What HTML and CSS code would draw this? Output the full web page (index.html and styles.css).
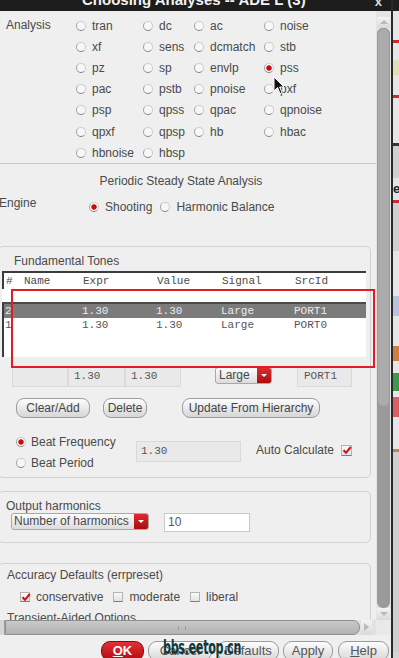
FILE: index.html
```html
<!DOCTYPE html>
<html>
<head>
<meta charset="UTF-8">
<title>Choosing Analyses -- ADE L (3)</title>
<link rel="stylesheet" href="styles.css">
</head>
<body>
<div class="screen">
  <div class="dialog">
    <div class="titlebar">
      <span class="title">Choosing Analyses -- ADE L (3)</span>
      <span class="close">x</span>
    </div>
    <div class="main">
      <div class="content">
        <!-- analysis type chooser -->
        <div class="analysis">
          <div class="lbl">Analysis</div>
          <label class="opt"><i class="radio"></i>tran</label>
          <label class="opt"><i class="radio"></i>dc</label>
          <label class="opt"><i class="radio"></i>ac</label>
          <label class="opt"><i class="radio"></i>noise</label>
          <label class="opt"><i class="radio"></i>xf</label>
          <label class="opt"><i class="radio"></i>sens</label>
          <label class="opt"><i class="radio"></i>dcmatch</label>
          <label class="opt"><i class="radio"></i>stb</label>
          <label class="opt"><i class="radio"></i>pz</label>
          <label class="opt"><i class="radio"></i>sp</label>
          <label class="opt"><i class="radio"></i>envlp</label>
          <label class="opt"><i class="radio on"></i>pss</label>
          <label class="opt"><i class="radio"></i>pac</label>
          <label class="opt"><i class="radio"></i>pstb</label>
          <label class="opt"><i class="radio"></i>pnoise</label>
          <label class="opt"><i class="radio"></i>pxf</label>
          <label class="opt"><i class="radio"></i>psp</label>
          <label class="opt"><i class="radio"></i>qpss</label>
          <label class="opt"><i class="radio"></i>qpac</label>
          <label class="opt"><i class="radio"></i>qpnoise</label>
          <label class="opt"><i class="radio"></i>qpxf</label>
          <label class="opt"><i class="radio"></i>qpsp</label>
          <label class="opt"><i class="radio"></i>hb</label>
          <label class="opt"><i class="radio"></i>hbac</label>
          <label class="opt"><i class="radio"></i>hbnoise</label>
          <label class="opt"><i class="radio"></i>hbsp</label>
        </div>

        <div class="pss">
          <div class="pss-title">Periodic Steady State Analysis</div>
          <div class="engine">
            <div class="engine-lbl">Engine</div>
            <div class="engine-opts">
              <label class="opt"><i class="radio on"></i>Shooting</label>
              <label class="opt"><i class="radio"></i>Harmonic Balance</label>
            </div>
          </div>
        </div>

        <!-- fundamental tones -->
        <div class="group tones">
          <div class="group-lbl">Fundamental Tones</div>
          <div class="table">
            <div class="trow thead"><span>#</span><span>Name</span><span>Expr</span><span>Value</span><span>Signal</span><span>SrcId</span></div>
            <div class="tgap"></div>
            <div class="tbody">
              <div class="trow sel"><span>2</span><span></span><span>1.30</span><span>1.30</span><span>Large</span><span>PORT1</span></div>
              <div class="trow"><span>1</span><span></span><span>1.30</span><span>1.30</span><span>Large</span><span>PORT0</span></div>
            </div>
          </div>
          <div class="editrow">
            <div class="field f1"></div>
            <div class="field f2">1.30</div>
            <div class="field f3">1.30</div>
            <div class="combo c-signal"><span>Large</span><b class="combo-btn"></b></div>
            <div class="field f4">PORT1</div>
          </div>
          <div class="btnrow">
            <div class="btn b-clear">Clear/Add</div>
            <div class="btn b-delete">Delete</div>
            <div class="btn b-update">Update From Hierarchy</div>
          </div>
          <div class="beat">
            <div class="beat-opts">
              <label class="opt"><i class="radio on"></i>Beat Frequency</label>
              <label class="opt"><i class="radio"></i>Beat Period</label>
            </div>
            <div class="field beat-field">1.30</div>
            <div class="auto">Auto Calculate <i class="chk on"><svg viewBox="0 0 10 10"><path d="M1.5 5.2 L4 7.8 L8.8 2" /></svg></i></div>
          </div>
        </div>

        <div class="group harm">
          <div class="group-lbl">Output harmonics</div>
          <div class="harm-row">
            <div class="combo c-harm"><span>Number of harmonics</span><b class="combo-btn"></b></div>
            <div class="field harm-field">10</div>
          </div>
        </div>

        <div class="group acc">
          <div class="group-lbl">Accuracy Defaults (errpreset)</div>
          <div class="chkrow">
            <label class="copt"><i class="chk on"><svg viewBox="0 0 10 10"><path d="M1.5 5.2 L4 7.8 L8.8 2" /></svg></i>conservative</label>
            <label class="copt"><i class="chk"></i>moderate</label>
            <label class="copt"><i class="chk"></i>liberal</label>
          </div>
          <div class="group-lbl sub">Transient-Aided Options</div>
        </div>
      </div>

      <div class="vscroll">
        <div class="sarrow up"></div>
        <div class="vtrack"><div class="vthumb"></div></div>
        <div class="sarrow down"></div>
      </div>
    </div>

    <div class="hbar">
      <div class="htrack">
        <div class="hleft"></div>
        <div class="hthumb"><i></i></div>
        <div class="sarrow right"></div>
      </div>
      <div class="hcorner"></div>
    </div>

    <div class="actions">
      <div class="abtn ok"><u>O</u>K</div>
      <div class="abtn a-cancel">Cancel</div>
      <div class="abtn a-defaults">Defaults</div>
      <div class="abtn a-apply">Apply</div>
      <div class="abtn a-help"><u>H</u>elp</div>
    </div>
  </div>

  <!-- neighbouring window behind the dialog -->
  <div class="edge">
    <div class="e-dark"></div>
    <div class="e-light" style="height:29px"></div>
    <div class="e-red"></div>
    <div class="e-light" style="height:17px"></div>
    <div class="e-yellow"></div>
    <div class="e-light" style="height:20px"></div>
    <div class="e-red"></div>
    <div class="e-light" style="height:45px"></div>
    <div class="e-line"></div>
    <div class="e-mid" style="height:32px"></div>
    <div class="e-glyph">e</div>
    <div class="e-red"></div>
    <div class="e-mid" style="height:48px"></div>
    <div class="e-light" style="height:45px"></div>
    <div class="e-blue"></div>
    <div class="e-light" style="height:30px"></div>
    <div class="e-orange"></div>
    <div class="e-light" style="height:12px"></div>
    <div class="e-green"></div>
    <div class="e-light" style="height:6px"></div>
    <div class="e-pink"></div>
    <div class="e-light" style="height:32px"></div>
    <div class="e-orange thin"></div>
    <div class="e-mid" style="height:200px"></div>
  </div>
</div>

<div class="mark"></div>
<svg class="cursor" viewBox="0 0 12 19"><path d="M1 1 L1 15 L4.5 11.5 L7 17.5 L9 16.6 L6.6 11 L11 11 Z" fill="#111" stroke="#fff" stroke-width="1"/></svg>
<div class="watermark">bbs.eetop.cn</div>
</body>
</html>
```

FILE: styles.css
```css
* {
  box-sizing: border-box;
}
body {
  margin: 0;
  width: 399px;
  height: 658px;
  overflow: hidden;
  position: relative;
  font-family: "Liberation Sans", Arial, sans-serif;
  font-size: 12px;
  color: #4a4a4a;
  background: #efefef;
}
.screen {
  display: flex;
  height: 658px;
}
.dialog {
  width: 391px;
  display: flex;
  flex-direction: column;
  background: #efefef;
}

/* title bar, mostly scrolled off the top */
.titlebar {
  height: 11px;
  flex: none;
  display: flex;
  overflow: hidden;
  background: #1d1d1d;
}
.title {
  margin: -8px 0 0 82px;
  font-size: 15px;
  font-weight: bold;
  line-height: 16px;
  color: #f2f2f2;
  white-space: nowrap;
}
.close {
  margin: -6px 0 0 auto;
  padding-right: 9px;
  font-size: 13px;
  font-weight: bold;
  line-height: 16px;
  color: #dcdcdc;
}

.main {
  display: flex;
  height: 609px;
  flex: none;
}
.content {
  width: 376px;
  overflow: hidden;
}

/* radios / checks */
.opt {
  display: flex;
  align-items: center;
  gap: 6px;
  white-space: nowrap;
}
.radio {
  width: 10px;
  height: 10px;
  flex: none;
  border-radius: 50%;
  border: 1px solid #cdcdcd;
  border-bottom-color: #808080;
  border-left-color: #a2a2a2;
  background: #f7f7f7;
}
.radio.on {
  background: radial-gradient(circle, #c50f0f 0 2.3px, #f7f7f7 3.1px);
}
.chk {
  width: 10px;
  height: 10px;
  flex: none;
  border: 1px solid #b4b4b4;
  border-bottom-color: #7c7c7c;
  background: linear-gradient(#fafafa, #e2e2e2);
  display: block;
}
.chk svg {
  display: block;
  width: 10px;
  height: 10px;
  margin: -1px 0 0 0;
}
.chk path {
  fill: none;
  stroke: #cc1218;
  stroke-width: 2;
}

/* analysis grid */
.analysis {
  display: grid;
  grid-template-columns: 76px 67px 51px 70px 1fr;
  grid-auto-rows: 21.2px;
  padding-top: 4px;
  height: 153px;
  border-bottom: 1px solid #c9c9c9;
}
.analysis .lbl {
  grid-row: 1 / span 7;
  padding-left: 6px;
  line-height: 21.2px;
}

.pss {
  padding-top: 9px;
}
.pss-title {
  text-align: center;
  padding-right: 14px;
  line-height: 16px;
}
.engine {
  display: flex;
  height: 20px;
  margin-top: 6px;
}
.engine-lbl {
  width: 90px;
  margin-left: -1px;
  line-height: 16px;
}
.engine-opts {
  display: flex;
  gap: 8px;
  padding-top: 3px;
  line-height: 16px;
}

/* group boxes */
.group {
  width: 373px;
  margin-left: -2px;
  border: 1px solid #d2d2d2;
  border-radius: 5px;
  flex: none;
}
.group-lbl {
  line-height: 16px;
  white-space: nowrap;
}
.tones {
  margin-top: 31px;
  padding-bottom: 4px;
}
.tones .group-lbl {
  margin-top: 6px;
  padding-left: 15px;
}

/* tones table */
.table {
  width: 364px;
  margin: 2px 0 0 3px;
  background: #fff;
}
.trow {
  display: grid;
  grid-template-columns: 18px 59px 74px 65px 73px 1fr;
  font-family: "Liberation Mono", "Courier New", monospace;
  font-size: 11px;
  line-height: 14px;
  height: 14px;
  color: #555;
  white-space: nowrap;
}
.thead {
  height: 18px;
  line-height: 16px;
  padding-left: 2px;
  border-top: 2px solid #3c3c3c;
  border-left: 2px solid #3c3c3c;
  color: #4a4a4a;
}
.tgap {
  height: 13px;
}
.tbody {
  height: 55px;
  border-left: 2px solid #3c3c3c;
  border-top: 2px solid #4a4a4a;
}
.tbody .trow {
  padding-left: 1px;
}
.trow.sel {
  background: #7b7b7b;
  color: #ececec;
}

.editrow {
  display: flex;
  height: 21px;
  margin-top: 9px;
  padding-left: 13px;
}
.field {
  height: 21px;
  border: 1px solid #dadada;
  background: #e9e9e9;
  padding-left: 5px;
  font-family: "Liberation Mono", "Courier New", monospace;
  font-size: 11px;
  line-height: 19px;
  color: #555;
}
.f1 { width: 56px; }
.f2 { width: 57px; }
.f3 { width: 56px; }
.f4 { width: 55px; margin-left: 25px; padding-left: 6px; }

.combo {
  display: flex;
  height: 17px;
  border: 1px solid #a8a8a8;
  border-radius: 3px;
  overflow: hidden;
  background: linear-gradient(#fbfbfb, #dcdcdc);
}
.combo span {
  flex: 1;
  padding-left: 3px;
  line-height: 14px;
  white-space: nowrap;
}
.combo-btn {
  width: 14px;
  flex: none;
  position: relative;
  background: linear-gradient(#de2a2e, #a90e12);
}
.combo-btn::after {
  content: "";
  position: absolute;
  left: 4px;
  top: 6px;
  border-left: 3px solid transparent;
  border-right: 3px solid transparent;
  border-top: 3px solid #fff;
}
.c-signal {
  width: 57px;
  margin: 1px 0 0 34px;
}

.btnrow {
  display: flex;
  margin-top: 11px;
  padding-left: 17px;
}
.btn {
  height: 20px;
  border: 1px solid #9c9c9c;
  border-radius: 8px;
  background: linear-gradient(#fdfdfd, #d6d6d6);
  text-align: center;
  line-height: 18px;
  color: #454545;
  white-space: nowrap;
}
.b-clear { width: 74px; }
.b-delete { width: 44px; margin-left: 13px; }
.b-update { width: 138px; margin-left: 35px; }

.beat {
  display: flex;
  margin-top: 13px;
  padding-left: 17px;
}
.beat-opts {
  width: 120px;
}
.beat-opts .opt {
  height: 21px;
  gap: 5px;
}
.beat-field {
  width: 105px;
  margin-top: 10px;
  padding-left: 4px;
}
.auto {
  display: flex;
  align-items: center;
  gap: 7px;
  height: 16px;
  margin: 11px 0 0 15px;
  white-space: nowrap;
}
.auto .chk {
  width: 11px;
  height: 11px;
}

.harm {
  margin-top: 13px;
  padding-bottom: 10px;
}
.harm .group-lbl {
  margin-top: 6px;
  padding-left: 7px;
}
.harm-row {
  display: flex;
  margin-top: -1px;
  padding-left: 12px;
}
.c-harm {
  width: 138px;
}
.c-harm span {
  padding-left: 2px;
}
.harm-field {
  width: 86px;
  height: 19px;
  margin-left: 15px;
  padding-left: 3px;
  line-height: 17px;
  background: #fff;
  border-color: #c9c9c9;
  font-family: "Liberation Sans", Arial, sans-serif;
  font-size: 12px;
}

.acc {
  margin-top: 20px;
  height: 120px;
}
.acc .group-lbl {
  margin-top: 3px;
  padding-left: 8px;
}
.acc .group-lbl.sub {
  margin-top: 5px;
}
.chkrow {
  display: flex;
  margin-top: 6px;
  padding-left: 21px;
  line-height: 16px;
}
.copt {
  display: flex;
  align-items: center;
  gap: 6px;
  margin-right: 10px;
}

/* scrollbars */
.vscroll {
  width: 15px;
  flex: none;
  display: flex;
  flex-direction: column;
  padding: 6px 1px 0;
  background: #e4e4e4;
}
.sarrow {
  position: relative;
  flex: none;
  background: linear-gradient(#f4f4f4, #d9d9d9);
}
.sarrow.up { height: 11px; }
.sarrow.down { height: 12px; }
.sarrow.up::after,
.sarrow.down::after,
.sarrow.right::after {
  content: "";
  position: absolute;
  left: 3px;
  border-left: 4px solid transparent;
  border-right: 4px solid transparent;
}
.sarrow.up::after {
  top: 3px;
  border-bottom: 4px solid #b9b9b9;
}
.sarrow.down::after {
  top: 4px;
  border-top: 4px solid #b9b9b9;
}
.vtrack {
  flex: 1;
  background: #9a9a9a;
  border-radius: 6px;
}
.vthumb {
  height: 379px;
  border: 1px solid #999;
  border-radius: 6px;
  background: #ababab;
}

.hbar {
  display: flex;
  height: 15px;
  flex: none;
}
.htrack {
  width: 376px;
  display: flex;
  padding-right: 4px;
  background: #e2e2e2;
}
.hleft {
  width: 5px;
  background: #d6d6d6;
  border-right: 1px solid #a0a0a0;
}
.hthumb {
  width: 356px;
  border: 1px solid #8e8e8e;
  border-radius: 0 7px 7px 0;
  background: linear-gradient(#c9c9c9, #b2b2b2);
  display: flex;
  justify-content: center;
  align-items: center;
}
.hthumb i {
  width: 8px;
  height: 4px;
  border-left: 1px solid #9a9a9a;
  border-right: 1px solid #9a9a9a;
}
.sarrow.right {
  width: 11px;
  margin-left: 1px;
}
.sarrow.right::after {
  left: 3px;
  top: 3px;
  border-top: 4px solid transparent;
  border-bottom: 4px solid transparent;
  border-left: 5px solid #b9b9b9;
  border-right: 0;
}
.hcorner {
  width: 15px;
  background: #e9e9e9;
}

/* bottom buttons */
.actions {
  display: flex;
  flex: 1;
  padding: 6px 0 0 101px;
  gap: 4px;
}
.abtn {
  height: 20px;
  border: 1px solid #9a9a9a;
  border-radius: 9px;
  background: linear-gradient(#fdfdfd, #d8d8d8);
  text-align: center;
  line-height: 18px;
  font-size: 13px;
  color: #555;
}
.abtn.ok {
  width: 43px;
  background: linear-gradient(#e63034, #b10d10);
  border-color: #860a0c;
  color: #fff;
  font-weight: bold;
}
.a-cancel { width: 64px; }
.a-defaults { width: 62px; margin-left: 1px; }
.a-apply { width: 50px; }
.a-help { width: 51px; margin-left: 1px; }

/* strip of the window behind */
.edge {
  width: 8px;
  display: flex;
  flex-direction: column;
  border-left: 2px solid #2a2a2a;
  background: #d4d4d4;
  overflow: hidden;
}
.edge div { flex: none; }
.e-dark { height: 11px; background: #202020; }
.e-light { background: #e6e6e6; }
.e-mid { background: #cfcfcf; }
.e-red { height: 3px; background: #d8242a; }
.e-yellow { height: 15px; background: #dfe0b6; }
.e-line { height: 3px; background: #333; }
.e-glyph { height: 22px; font-weight: bold; font-size: 13px; line-height: 22px; color: #222; background: #e2e2e2; }
.e-blue { height: 20px; background: #b7c3dc; }
.e-orange { height: 15px; background: #d0803a; }
.e-orange.thin { height: 3px; }
.e-green { height: 18px; background: #3c9b4a; }
.e-pink { height: 20px; background: #dd5f63; }

/* overlays drawn on the screenshot */
.mark {
  position: absolute;
  left: 11px;
  top: 289px;
  width: 364px;
  height: 79px;
  border: 2px solid #e31b23;
}
.cursor {
  position: absolute;
  left: 273px;
  top: 76px;
  width: 12px;
  height: 19px;
}
.watermark {
  position: absolute;
  left: 163px;
  top: 636px;
  font-family: "DejaVu Sans Condensed", "DejaVu Sans", sans-serif;
  font-weight: bold;
  font-size: 20px;
  line-height: 22px;
  letter-spacing: -0.5px;
  color: #0c3a3c;
  transform: scaleX(0.62);
  transform-origin: left top;
}
```
